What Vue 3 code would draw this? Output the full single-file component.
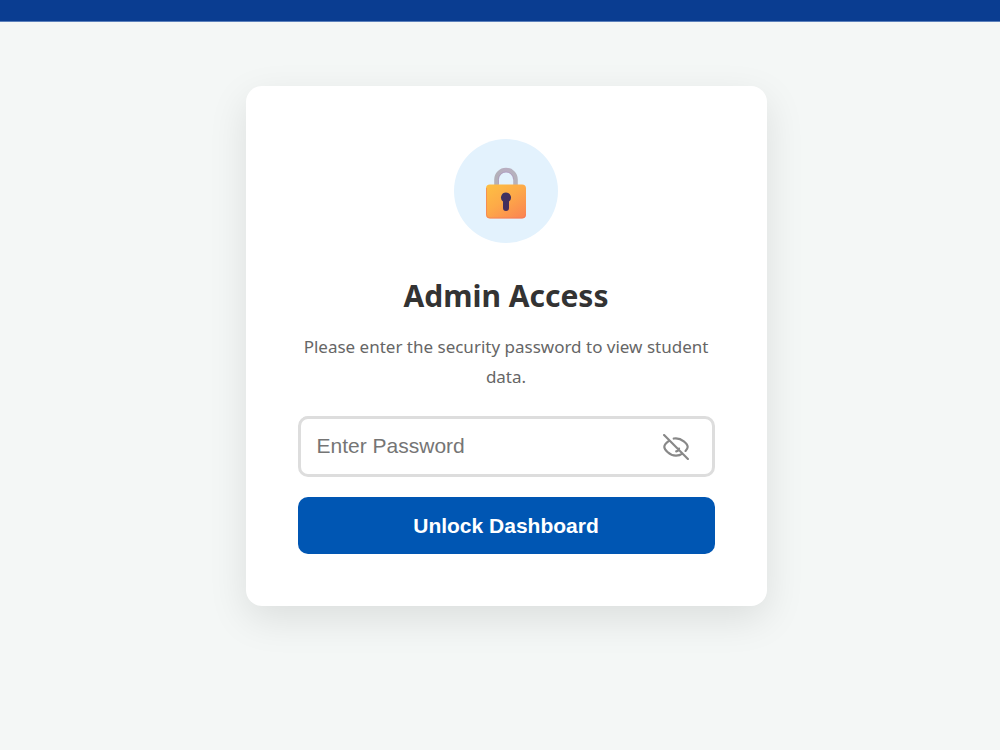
<script setup>
import { ref } from 'vue'

const password = ref('')
const visible = ref(false)
</script>

<template>
  <div class="page">
    <header class="topbar"></header>
    <main class="content">
      <form class="card" @submit.prevent>
        <div class="badge">
          <svg class="lock" viewBox="0 0 42 52" aria-hidden="true">
            <defs>
              <linearGradient id="body" x1="0" y1="0" x2="0.8" y2="1">
                <stop offset="0" stop-color="#fdc043" />
                <stop offset="0.5" stop-color="#fdaa48" />
                <stop offset="1" stop-color="#fb8850" />
              </linearGradient>
              <linearGradient id="shackle" x1="0" y1="0" x2="1" y2="0">
                <stop offset="0" stop-color="#b3b0b9" />
                <stop offset="0.5" stop-color="#b9aec2" />
                <stop offset="1" stop-color="#b5b2bc" />
              </linearGradient>
              <linearGradient id="hole" x1="0" y1="0" x2="1" y2="1">
                <stop offset="0" stop-color="#3c3464" />
                <stop offset="1" stop-color="#4a2c58" />
              </linearGradient>
            </defs>
            <path d="M11.5 20V12.5a9.5 9.5 0 0 1 19 0V20" fill="none" stroke="url(#shackle)" stroke-width="4.6" />
            <path d="M13.5 17.500V12.500a7.500 7.500 0 0 1 15 0" fill="none" stroke="#a98fbd" stroke-opacity=".6" />
            <rect x="1" y="17.5" width="40" height="34" rx="4" fill="url(#body)" />
            <path d="M1.500 21V47.500q0 3.500 3.500 3.500h32q3.500 0 3.500-3.500" fill="none" stroke="#ef6b5f" stroke-opacity=".5" />
            <path d="M21 25.500a5 5 0 0 1 3 9V41a3 3 0 0 1-6 0v-6.500a5 5 0 0 1 3-9z" fill="url(#hole)" />
          </svg>
        </div>
        <h1 class="title">Admin Access</h1>
        <p class="hint">Please enter the security password to view student data.</p>
        <div class="field">
          <input
            v-model="password"
            class="input"
            :type="visible ? 'text' : 'password'"
            placeholder="Enter Password"
            aria-label="Password"
          />
          <button class="toggle" type="button" aria-label="Show password" @click="visible = !visible">
            <svg class="eye" viewBox="0 0 24 24" aria-hidden="true">
              <path d="M5.500 6.300C2.800 8.200 1.200 10.600 1.200 12c0 1.800 4.200 8 10.800 8 2.400 0 4.400-.8 6-2.100M9.900 4.200C17.500 2.900 22.800 9.800 22.800 12c0 1-.8 2.300-2 3.600M14.800 13.400a3 3 0 0 1-2.600 2.600M1 1l22 22" />
            </svg>
          </button>
        </div>
        <button class="submit" type="submit">Unlock Dashboard</button>
      </form>
    </main>
  </div>
</template>

<style>
body {
  background: #f4f7f6;
}
</style>

<style scoped>
.page {
  min-height: 100vh;
  background: #f4f7f6;
  font-family: "Segoe UI", "Noto Sans", "Open Sans", sans-serif;
}
.topbar {
  height: 21px;
  background: #0a3d91;
  border-bottom: 1px solid #5b80bb;
}
.content {
  display: flex;
  justify-content: center;
  padding: 64px 0 64px 12px;
}
.card {
  box-sizing: border-box;
  width: 100%;
  max-width: 521px;
  padding: 53px 52px 52px;
  border-radius: 16px;
  background: #fff;
  box-shadow: 0 13px 39px rgba(0, 0, 0, 0.1);
  text-align: center;
}
.badge {
  display: flex;
  align-items: center;
  justify-content: center;
  width: 104px;
  height: 104px;
  margin: 0 auto 32px;
  border-radius: 50%;
  background: #e3f2fd;
}
.lock {
  width: 42px;
  height: 52px;
  margin-top: 4px;
}
.title {
  margin: 0 0 15px;
  color: #333;
  font-size: 30px;
  font-weight: 700;
  line-height: 42px;
}
.hint {
  margin: 0 0 24px;
  color: #666;
  font-size: 17px;
  line-height: 30px;
}
.field {
  display: flex;
  align-items: center;
  box-sizing: border-box;
  height: 61px;
  margin-bottom: 20px;
  padding: 0 23px 0 16px;
  border: 3px solid #ddd;
  border-radius: 10px;
}
.input {
  flex: 1;
  min-width: 0;
  padding: 0 0 2px;
  border: 0;
  outline: 0;
  background: transparent;
  color: #333;
  font-family: "Liberation Sans", Arial, sans-serif;
  font-size: 21px;
}
.input::placeholder {
  color: #757575;
}
.toggle {
  display: flex;
  padding: 0;
  border: 0;
  background: none;
  cursor: pointer;
}
.eye {
  width: 26px;
  height: 26px;
  fill: none;
  stroke: #888;
  stroke-width: 2;
  stroke-linecap: round;
  stroke-linejoin: round;
}
.submit {
  width: 100%;
  height: 57px;
  border: 0;
  border-radius: 10px;
  background: #0056b3;
  color: #fff;
  font-family: "Liberation Sans", Arial, sans-serif;
  font-size: 21px;
  font-weight: 700;
  cursor: pointer;
}
</style>
